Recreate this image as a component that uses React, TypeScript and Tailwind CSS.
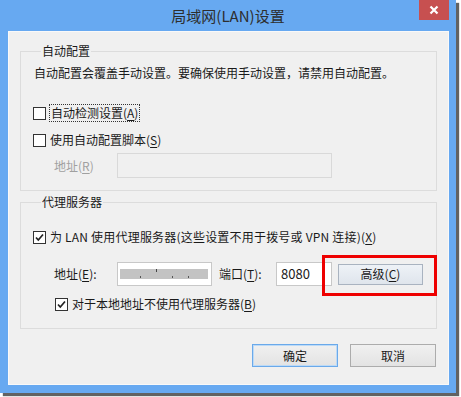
import React from "react";

const Check = ({ checked }: { checked?: boolean }) => (
  <div className="w-[13px] h-[13px] border border-[#333333] bg-white flex items-center justify-center shrink-0">
    {checked && (
      <svg width="11" height="11" viewBox="0 0 11 11">
        <path d="M2 5.5 L4.3 8 L9 2.5" fill="none" stroke="#222" strokeWidth="1.7" />
      </svg>
    )}
  </div>
);

const U = ({ children }: { children: React.ReactNode }) => <span className="underline underline-offset-2">{children}</span>;

export default function App() {
  return (
    <div className="w-[461px] h-[397px] bg-white font-['Noto_Sans_CJK_SC','Noto_Sans',sans-serif] text-[12px] leading-[16px] text-[#1a1a1a]">
      <div className="w-[456px] h-[393px] bg-[#67a9f1] flex flex-col shadow-[3px_3px_1px_rgba(70,70,70,0.85)]">
        <div className="h-[31px] relative flex items-center justify-center text-[15px] text-[#2e2e2e]">
          <span>局域网(LAN)设置</span>
          <div className="absolute right-[7px] top-0 w-[30px] h-[20px] bg-[#c75050] flex items-center justify-center">
            <svg width="10" height="10" viewBox="0 0 10 10">
              <path d="M1.5 1.5 L8.5 8.5 M8.5 1.5 L1.5 8.5" stroke="#fff" strokeWidth="2.2" />
            </svg>
          </div>
        </div>
        <div className="ml-[8px] mr-[7px] mb-[8px] flex-1 bg-[#f0f0f0] border border-[#f9f9f9] px-[11px] pt-[11px] flex flex-col">
          <fieldset className="border border-[#dcdcdc] pl-[12px] pb-[12px]">
            <legend className="ml-[8px] px-[1px] leading-[16px]">自动配置</legend>
            <div className="mt-[6px] ml-[1px] h-[16px]">自动配置会覆盖手动设置。要确保使用手动设置，请禁用自动配置。</div>
            <div className="mt-[23px] h-[18px] flex items-center">
              <Check />
              <span className="ml-[3px] px-[1px] h-[18px] flex items-center border border-dotted border-[#333]">
                自动检测设置(<U>A</U>)
              </span>
            </div>
            <div className="mt-[9px] h-[18px] flex items-center">
              <Check />
              <span className="ml-[4px]">使用自动配置脚本(<U>S</U>)</span>
            </div>
            <div className="mt-[4px] flex items-center ml-[21px]">
              <span className="w-[63px] text-[#a0a0a0]">地址(<U>R</U>)</span>
              <div className="w-[215px] h-[25px] border border-[#d9d9d9] bg-[#f0f0f0]" />
            </div>
          </fieldset>
          <fieldset className="mt-[3px] border border-[#dcdcdc] pl-[12px] pb-[15px]">
            <legend className="ml-[8px] px-[1px] leading-[16px]">代理服务器</legend>
            <div className="mt-[18px] h-[18px] flex items-center">
              <Check checked />
              <span className="ml-[4px] tracking-[0.2px]">为 LAN 使用代理服务器(这些设置不用于拨号或 VPN 连接)(<U>X</U>)</span>
            </div>
            <div className="mt-[16px] h-[24px] flex items-center ml-[21px]">
              <span className="w-[63px]">地址(<U>E</U>):</span>
              <div className="w-[95px] h-[24px] border border-[#c8c8c8] bg-white flex items-center pl-[2px]">
                <div className="w-[88px] h-[10px] bg-[#c3c3c3] blur-[0.6px] flex items-start justify-around px-[12px]">
                  <div className="w-[1px] h-[2px] bg-[#555] mt-[7px]" />
                  <div className="w-[1px] h-[3px] bg-[#444]" />
                  <div className="w-[1px] h-[2px] bg-[#555] mt-[7px]" />
                  <div className="w-[1px] h-[2px] bg-[#555] mt-[7px]" />
                </div>
              </div>
              <span className="ml-[7px] w-[57px]">端口(<U>T</U>):</span>
              <div className="w-[56px] h-[24px] border border-[#c8c8c8] bg-white flex items-center pl-[4px] text-[13px]">8080</div>
              <div className="relative ml-[6px]">
                <div className="w-[85px] h-[21px] border border-[#a9b3c0] bg-gradient-to-b from-[#eef2f7] to-[#dfe5ec] flex items-center justify-center">
                  高级(<U>C</U>)
                </div>
                <div className="absolute left-[-16px] top-[-9px] w-[115px] h-[41px] border-[3px] border-[#ee0000]" />
              </div>
            </div>
            <div className="mt-[9px] h-[18px] flex items-center ml-[22px]">
              <Check checked />
              <span className="ml-[4px]">对于本地地址不使用代理服务器(<U>B</U>)</span>
            </div>
          </fieldset>
          <div className="mt-[15px] mr-[1px] flex justify-end gap-[12px]">
            <div className="w-[86px] h-[23px] border border-[#6aa9ea] shadow-[inset_0_0_0_1px_#bcdaf7] bg-gradient-to-b from-[#f0f0f0] to-[#e3e3e3] flex items-center justify-center">
              确定
            </div>
            <div className="w-[86px] h-[23px] border border-[#acacac] bg-gradient-to-b from-[#f0f0f0] to-[#e3e3e3] flex items-center justify-center">
              取消
            </div>
          </div>
        </div>
      </div>
    </div>
  );
}
